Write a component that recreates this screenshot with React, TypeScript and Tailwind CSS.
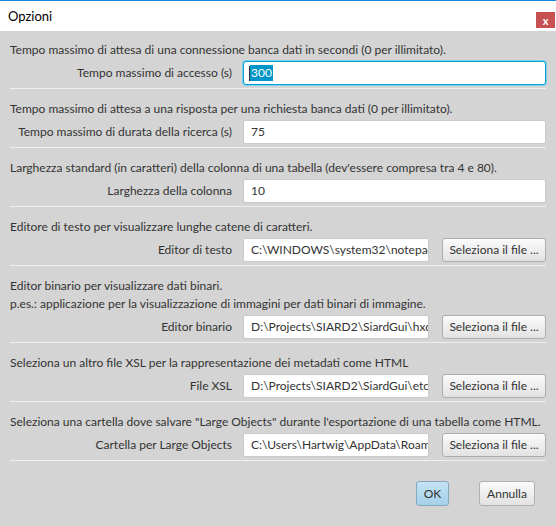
const font = { fontFamily: 'Lato, "Liberation Sans", sans-serif' }

function Separator() {
  return <div className="h-px bg-[#efefef]" />
}

function FileButton() {
  return (
    <button className="h-[24px] w-[104px] shrink-0 rounded-[3px] border border-[#adadad] bg-gradient-to-b from-[#fbfbfb] to-[#e2e2e2] text-[12px] text-[#333]">
      Seleziona il file ...
    </button>
  )
}

function TextInput({ value, focused = false }: { value: string; focused?: boolean }) {
  if (focused) {
    return (
      <div className="flex h-[24px] min-w-0 flex-1 items-center overflow-hidden rounded-[3px] border border-[#039ed3] bg-white pl-[5px] shadow-[0_0_0_1px_#7fd0ee]">
        <span className="h-[15px] w-px bg-[#333]" />
        <span className="bg-[#0096c9] px-px leading-[16px] text-white">{value}</span>
      </div>
    )
  }
  return (
    <div className="flex h-[24px] min-w-0 flex-1 items-center overflow-hidden whitespace-nowrap rounded-[2px] border border-[#c9c9c9] bg-white pl-[7px] text-[#333]">
      {value}
    </div>
  )
}

interface SectionProps {
  lines: string[]
  label: string
  value: string
  focused?: boolean
  withButton?: boolean
  first?: boolean
}

function Section({ lines, label, value, focused, withButton, first }: SectionProps) {
  return (
    <div className={first ? 'pt-[10px]' : 'pt-[11px]'}>
      {lines.map((l) => (
        <div key={l} className="whitespace-nowrap leading-[18px] text-[#333]">
          {l}
        </div>
      ))}
      <div className="mt-[2px] flex items-center pb-[3px]">
        <div className="w-[222px] shrink-0 whitespace-nowrap text-right text-[#333]">{label}</div>
        <div className="ml-[11px] flex min-w-0 flex-1 items-center gap-[13px]">
          <TextInput value={value} focused={focused} />
          {withButton && <FileButton />}
        </div>
      </div>
    </div>
  )
}

export default function App() {
  return (
    <div className="flex h-[526px] w-[556px] flex-col overflow-hidden bg-[#d4d4d4] text-[12px]" style={font}>
      {/* title bar */}
      <div className="relative h-[31px] shrink-0 border-t border-[#1883d7] bg-white">
        <div className="pl-[8px] pt-[6px] text-[13px] text-black">Opzioni</div>
        <div className="absolute right-px top-[11px] flex h-[16px] w-[19px] items-center justify-center bg-[#c75050] text-[11px] font-bold leading-none text-white">
          x
        </div>
      </div>

      <div className="px-[10px]">
        <Section
          first
          lines={['Tempo massimo di attesa di una connessione banca dati in secondi (0 per illimitato).']}
          label="Tempo massimo di accesso (s)"
          value="300"
          focused
        />
        <Separator />
        <Section
          lines={['Tempo massimo di attesa a una risposta per una richiesta banca dati (0 per illimitato).']}
          label="Tempo massimo di durata della ricerca (s)"
          value="75"
        />
        <Separator />
        <Section
          lines={["Larghezza standard (in caratteri) della colonna di una tabella (dev'essere compresa tra 4 e 80)."]}
          label="Larghezza della colonna"
          value="10"
        />
        <Separator />
        <Section
          lines={['Editore di testo per visualizzare lunghe catene di caratteri.']}
          label="Editor di testo"
          value="C:\WINDOWS\system32\notepad.exe"
          withButton
        />
        <Separator />
        <Section
          lines={[
            'Editor binario per visualizzare dati binari.',
            'p.es.: applicazione per la visualizzazione di immagini per dati binari di immagine.',
          ]}
          label="Editor binario"
          value="D:\Projects\SIARD2\SiardGui\hxd\HxD.exe"
          withButton
        />
        <Separator />
        <Section
          lines={['Seleziona un altro file XSL per la rappresentazione dei metadati come HTML']}
          label="File XSL"
          value="D:\Projects\SIARD2\SiardGui\etc\metadata.xsl"
          withButton
        />
        <Separator />
        <Section
          lines={['Seleziona una cartella dove salvare "Large Objects" durante l\'esportazione di una tabella come HTML.']}
          label="Cartella per Large Objects"
          value="C:\Users\Hartwig\AppData\Roaming\SiardGui"
          withButton
        />
        <Separator />
      </div>

      <div className="flex justify-end gap-[30px] pr-[21px] pt-[20px]">
        <button className="h-[25px] w-[33px] rounded-[3px] border border-[#84a9bf] bg-gradient-to-b from-[#c4e3f4] to-[#a5d1e9] text-[12px] text-[#333]">
          OK
        </button>
        <button className="h-[25px] w-[56px] rounded-[3px] border border-[#b0b0b0] bg-gradient-to-b from-[#fbfbfb] to-[#e2e2e2] text-[12px] text-[#333]">
          Annulla
        </button>
      </div>
    </div>
  )
}
